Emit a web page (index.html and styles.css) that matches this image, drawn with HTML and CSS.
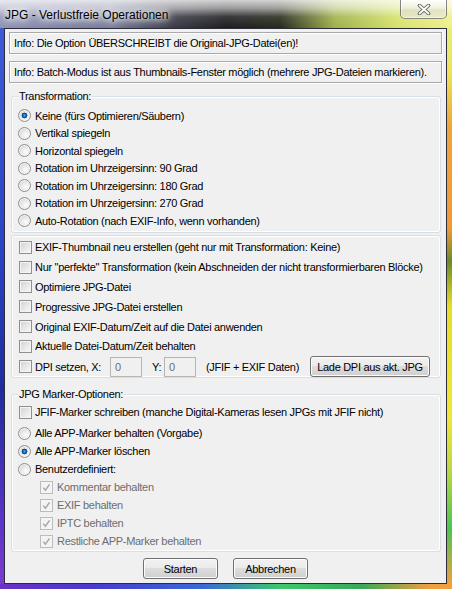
FILE: index.html
```html
<!DOCTYPE html>
<html lang="de">
<head>
  <meta charset="UTF-8" />
  <title>JPG - Verlustfreie Operationen</title>
  <link rel="stylesheet" href="styles.css">
</head>
<body>

<div class="window">
  <div class="titlebar">
    <span class="title">JPG - Verlustfreie Operationen</span>
    <button class="close-btn" aria-label="Schließen">
      <svg width="14" height="11" viewBox="0 0 14 11">
        <path d="M2.5 1.5 L11.5 9.5 M11.5 1.5 L2.5 9.5" stroke="#5a5a5a" stroke-width="3.6" stroke-linecap="round" fill="none"/>
        <path d="M2.5 1.5 L11.5 9.5 M11.5 1.5 L2.5 9.5" stroke="#fff" stroke-width="1.8" stroke-linecap="round" fill="none"/>
      </svg>
    </button>
  </div>

  <div class="frame-middle">
    <div class="edge-left"></div>

    <div class="client">
      <div class="info info-first">Info: Die Option ÜBERSCHREIBT die Original-JPG-Datei(en)!</div>
      <div class="info">Info: Batch-Modus ist aus Thumbnails-Fenster möglich (mehrere JPG-Dateien markieren).</div>

      <fieldset class="group group-transform">
        <legend>Transformation:</legend>
        <label class="row"><span class="radio checked"></span>Keine (fürs Optimieren/Säubern)</label>
        <label class="row"><span class="radio"></span>Vertikal spiegeln</label>
        <label class="row"><span class="radio"></span>Horizontal spiegeln</label>
        <label class="row"><span class="radio"></span>Rotation im Uhrzeigersinn: 90 Grad</label>
        <label class="row"><span class="radio"></span>Rotation im Uhrzeigersinn: 180 Grad</label>
        <label class="row"><span class="radio"></span>Rotation im Uhrzeigersinn: 270 Grad</label>
        <label class="row"><span class="radio"></span>Auto-Rotation (nach EXIF-Info, wenn vorhanden)</label>
      </fieldset>

      <div class="group group-options">
        <label class="row"><span class="check"></span>EXIF-Thumbnail neu erstellen (geht nur mit Transformation: Keine)</label>
        <label class="row"><span class="check"></span>Nur "perfekte" Transformation (kein Abschneiden der nicht transformierbaren Blöcke)</label>
        <label class="row"><span class="check"></span>Optimiere JPG-Datei</label>
        <label class="row"><span class="check"></span>Progressive JPG-Datei erstellen</label>
        <label class="row"><span class="check"></span>Original EXIF-Datum/Zeit auf die Datei anwenden</label>
        <label class="row"><span class="check"></span>Aktuelle Datei-Datum/Zeit behalten</label>
        <div class="row dpi-row">
          <label class="dpi-label"><span class="check"></span>DPI setzen, X:</label>
          <span class="edit">0</span>
          <span class="dpi-y">Y:</span>
          <span class="edit">0</span>
          <span class="dpi-note">(JFIF + EXIF Daten)</span>
          <button class="btn btn-dpi">Lade DPI aus akt. JPG</button>
        </div>
      </div>

      <fieldset class="group group-marker">
        <legend>JPG Marker-Optionen:</legend>
        <label class="row row-jfif"><span class="check"></span>JFIF-Marker schreiben (manche Digital-Kameras lesen JPGs mit JFIF nicht)</label>
        <div class="marker-radios">
          <label class="row"><span class="radio"></span>Alle APP-Marker behalten (Vorgabe)</label>
          <label class="row"><span class="radio checked"></span>Alle APP-Marker löschen</label>
          <label class="row"><span class="radio"></span>Benutzerdefiniert:</label>
        </div>
        <div class="sub-options">
          <label class="row disabled"><span class="check checked"><svg width="11" height="11" viewBox="0 0 11 11"><path d="M2.3 5.6 L4.4 8.2 L8.6 2.4" stroke="#a9a9a9" stroke-width="1.5" fill="none"/></svg></span>Kommentar behalten</label>
          <label class="row disabled"><span class="check checked"><svg width="11" height="11" viewBox="0 0 11 11"><path d="M2.3 5.6 L4.4 8.2 L8.6 2.4" stroke="#a9a9a9" stroke-width="1.5" fill="none"/></svg></span>EXIF behalten</label>
          <label class="row disabled"><span class="check checked"><svg width="11" height="11" viewBox="0 0 11 11"><path d="M2.3 5.6 L4.4 8.2 L8.6 2.4" stroke="#a9a9a9" stroke-width="1.5" fill="none"/></svg></span>IPTC behalten</label>
          <label class="row disabled"><span class="check checked"><svg width="11" height="11" viewBox="0 0 11 11"><path d="M2.3 5.6 L4.4 8.2 L8.6 2.4" stroke="#a9a9a9" stroke-width="1.5" fill="none"/></svg></span>Restliche APP-Marker behalten</label>
        </div>
      </fieldset>

      <div class="actions">
        <button class="btn">Starten</button>
        <button class="btn">Abbrechen</button>
      </div>
    </div>

    <div class="edge-right"></div>
  </div>

  <div class="edge-bottom"></div>
</div>

</body>
</html>
```

FILE: styles.css
```css
:root {
  --dialog-bg: #f0f0f0;
  --group-border: #d5dfe5;
  --disabled-text: #6d6d6d;
}

* {
  box-sizing: border-box;
}

body {
  margin: 0;
  font-family: "Liberation Sans", Arial, sans-serif;
  font-size: 11px;
  letter-spacing: -0.3px;
  color: #000;
  background: #5a48c8;
}

.window {
  width: 452px;
  height: 589px;
  display: flex;
  flex-direction: column;
  overflow: hidden;
}

/* glass title bar */
.titlebar {
  height: 28px;
  display: flex;
  justify-content: space-between;
  align-items: flex-start;
  background:
    linear-gradient(to bottom, rgba(255,255,255,.8) 0, rgba(255,255,255,.55) 30%, rgba(255,255,255,.12) 60%, rgba(255,255,255,0) 100%),
    linear-gradient(90deg, #8f93b4 0, #767a98 25%, #3b3b48 38%, #1e1e22 50%, #262a1c 62%, #9fb04a 74%, #d6e26a 88%, #f0f08a 100%);
}

.title {
  margin: 8px 0 0 5px;
  font-size: 12px;
  line-height: 15px;
  letter-spacing: 0;
  text-shadow: 0 0 5px #fff, 0 0 9px #fff, 0 0 12px rgba(255,255,255,.9);
}

.close-btn {
  width: 47px;
  height: 19px;
  margin-right: 5px;
  padding: 0;
  display: flex;
  align-items: center;
  justify-content: center;
  border: 1px solid rgba(40,40,40,.55);
  border-top: 0;
  border-radius: 0 0 5px 5px;
  background: linear-gradient(to bottom, rgba(255,255,255,.8), rgba(238,238,238,.6) 45%, rgba(205,205,205,.45) 55%, rgba(235,235,235,.65));
  box-shadow: inset 0 0 0 1px rgba(255,255,255,.5);
}

.frame-middle {
  height: 556px;
  display: flex;
}

.edge-left {
  width: 4px;
  background: linear-gradient(#3d5bd6, #2a44c4 40%, #1f2c9e 65%, #5a34c6 88%, #7a3ccc);
}

.edge-right {
  width: 5px;
  background: linear-gradient(#e4ee7c 0, #eee45a 8%, #f0a43c 18%, #f09a38 36%, #6c8a2a 42%, #e8dc2c 50%, #f2e63a 70%, #b8d846 80%, #4cc452 90%, #f0a040 100%);
}

.edge-bottom {
  height: 5px;
  background: linear-gradient(90deg, #6a32c4 0, #4a3ad0 20%, #3a6ad8 45%, #3cc86a 62%, #3aa858 80%, #f0a040 95%);
}

.client {
  width: 443px;
  display: flex;
  flex-direction: column;
  border: 1px solid #2c2c3a;
  background: var(--dialog-bg);
}

/* info lines */
.info {
  height: 22px;
  margin: 7px 4px 0;
  padding: 0 4px;
  line-height: 20px;
  border: 1px solid #a9a9a9;
  box-shadow: 1px 1px 0 #fff, inset 1px 1px 0 #fff;
}

.info-first {
  margin-top: 3px;
}

/* group boxes */
.group {
  margin: 7px 5px 0 6px;
  padding: 4px 6px 2px;
  min-width: 0;
  border: 1px solid var(--group-border);
  border-radius: 3px;
  box-shadow: inset 0 0 0 1px #fff;
}

.group legend {
  padding: 0 1px;
  line-height: 13px;
  background: var(--dialog-bg);
}

.group-options {
  margin-top: 2px;
  padding: 2px 5px 0 7px;
}

.group-marker {
  margin-top: 10px;
  padding: 2px 6px 1px;
}

.row {
  display: flex;
  align-items: center;
  gap: 4px;
  height: 17.5px;
  white-space: nowrap;
}

.group-options .row {
  height: 19.8px;
  gap: 3px;
}

.group-marker .row {
  height: 18px;
}

.row-jfif {
  padding-left: 1px;
  gap: 3px;
}

.marker-radios {
  margin-top: 3px;
}

.sub-options .row {
  padding-left: 22px;
}

.row.disabled {
  color: var(--disabled-text);
}

/* radio buttons and check boxes, Win7 look */
.radio {
  flex: none;
  width: 13px;
  height: 13px;
  border: 1px solid #8e8f8f;
  border-radius: 50%;
  background: radial-gradient(circle at 62% 62%, #fdfdfd 0, #ececec 35%, #d4d4d4 75%, #c6c6c6 100%);
  box-shadow: inset 0 0 0 1px #f6f6f6;
}

.radio.checked {
  background:
    radial-gradient(circle at 50% 50%, #59b0ee 0, #1a66b6 1.5px, #0a3f7e 2.6px, rgba(10,63,126,0) 3.2px),
    radial-gradient(circle at 62% 62%, #fdfdfd 0, #ececec 35%, #d4d4d4 75%, #c6c6c6 100%);
}

.check {
  flex: none;
  width: 13px;
  height: 13px;
  display: flex;
  align-items: center;
  justify-content: center;
  border: 1px solid #8e8f8f;
  background: linear-gradient(135deg, #d2d2d2 0, #e6e6e6 50%, #f8f8f8 100%);
  box-shadow: inset 0 0 0 1px #f4f4f4;
}

.check.checked {
  border-color: #bcbcbc;
  background: #f4f4f4;
  box-shadow: none;
}

/* DPI row */
.group-options .dpi-row {
  height: 21px;
  gap: 0;
}

.dpi-label {
  width: 91px;
  display: flex;
  align-items: center;
  gap: 3px;
}

.edit {
  width: 32px;
  height: 20px;
  padding-left: 4px;
  line-height: 18px;
  color: var(--disabled-text);
  border: 1px solid #b5b5b5;
  background: var(--dialog-bg);
}

.dpi-y {
  width: 12px;
  margin-left: 10px;
}

.dpi-note {
  margin-left: 10px;
}

/* push buttons */
.btn {
  width: 75px;
  height: 21px;
  padding: 0;
  font: inherit;
  letter-spacing: inherit;
  color: #000;
  border: 1px solid #707070;
  border-radius: 3px;
  background: linear-gradient(#f2f2f2 0, #ebebeb 45%, #dddddd 50%, #cfcfcf 100%);
  box-shadow: inset 0 0 0 1px #fcfcfc;
}

.btn-dpi {
  width: 120px;
  margin-left: auto;
  margin-right: 5px;
}

.actions {
  display: flex;
  justify-content: center;
  gap: 15px;
  margin-top: 6px;
}
```
